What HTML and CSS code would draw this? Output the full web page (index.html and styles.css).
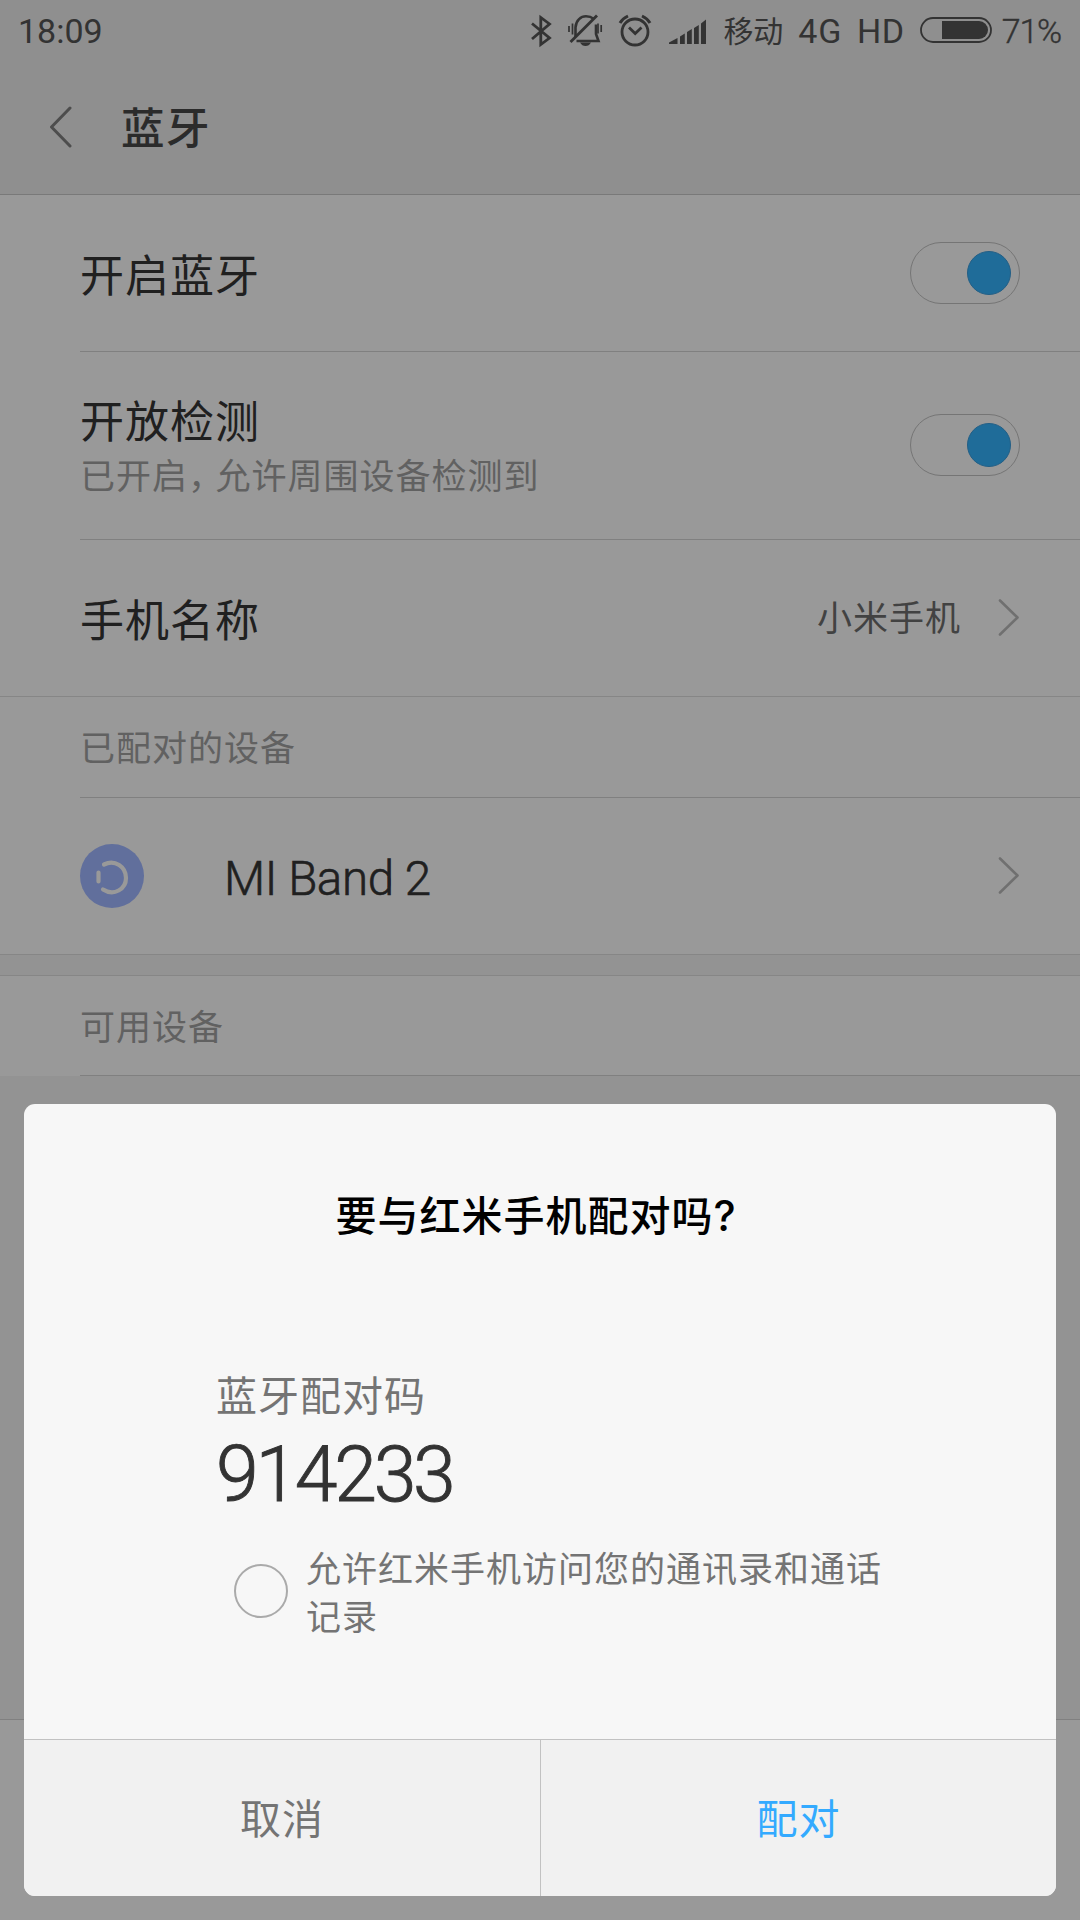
FILE: index.html
```html
<!DOCTYPE html>
<html lang="zh-CN">
<head>
<meta charset="utf-8">
<title>蓝牙</title>
<link rel="stylesheet" href="styles.css">
</head>
<body>
<div class="screen">
  <header class="top">
    <div class="status">
      <span class="clock">18:09</span>
      <svg class="st-icons" width="200" height="50" viewBox="520 5 200 50" fill="none" stroke="#333">
        <path d="M532 22.500 549.500 37 540.800 43.500V16.500L549.500 23 532 38" stroke-width="2.800"/>
        <g stroke-width="2.600">
          <path d="M575.500 36V26.500C576 19 581 15.300 586 15.300 590 15.300 592 16.500 594 18M596 23.500V33L598.500 40H576.500"/>
          <path d="M597 14.500 570.500 41" stroke-width="2.800"/>
          <path d="M569 25v6M572.500 22.500v11M598 22.500v10M601.200 24v7" stroke-width="1.700"/>
        </g>
        <path d="M580 41.500H591Q589 45 585.500 45T580 41.500Z" fill="#333" stroke="none"/>
        <circle cx="635" cy="31" r="13" stroke-width="2.800"/>
        <path d="M629 26.500 635.200 32.500 641.500 26.500" stroke-width="2.800"/>
        <path d="M620 22Q622.500 17.500 628 15M650 22Q647.500 17.500 642 15" stroke-width="3"/>
        <path d="M669 43V41.500L677.500 37V43ZM680 43V35.500L684.800 32.500V43ZM687 43V31L691.800 28V43ZM694 43V27L698.800 24V43ZM701 43V22.500L706 18.500V43Z" fill="#333" stroke="none"/>
      </svg>
      <span class="carrier">移动</span>
      <span class="net">4G</span>
      <span class="hd">HD</span>
      <svg class="battery" width="72" height="26" viewBox="0 0 72 26"><rect x="1" y="1" width="70" height="24" rx="12" fill="none" stroke="#333" stroke-width="1.800"/><path d="M22 4H59A9 9 0 0 1 59 22H22Z" fill="#333"/></svg>
      <span class="pct">71%</span>
    </div>
    <div class="titlebar">
      <svg class="back" width="24" height="42" viewBox="0 0 24 42"><path d="M21 2 2.500 21 21 40" fill="none" stroke="#4d4d4d" stroke-width="3" stroke-linecap="round" stroke-linejoin="round"/></svg>
      <h1>蓝牙</h1>
    </div>
  </header>
  <main>
    <div class="row r1"><span class="label">开启蓝牙</span><i class="toggle"><b></b></i></div>
    <div class="row r2">
      <div class="stack"><span class="label">开放检测</span><span class="sub">已开启<span class="comma">，</span>允许周围设备检测到</span></div>
      <i class="toggle"><b></b></i>
    </div>
    <div class="row r3"><span class="label">手机名称</span><span class="value">小米手机</span>
      <svg class="chev" width="22" height="38" viewBox="0 0 22 38"><path d="M2 1.500 19.500 18.500 2 35.500"/></svg></div>
    <div class="section">已配对的设备</div>
    <div class="row r4">
      <svg class="band" width="64" height="64" viewBox="0 0 64 64" fill="none" stroke="#999" stroke-width="4.200" stroke-linecap="round"><circle cx="32" cy="32" r="32" fill="#616f9c" stroke="none"/><path d="M24 20.500C35 15 46 23 46 34 46 45 34 52.500 23 45.500M18.500 28.500V37.500"/></svg>
      <span class="label device">MI Band 2</span>
      <svg class="chev" width="22" height="38" viewBox="0 0 22 38"><path d="M2 1.500 19.500 18.500 2 35.500"/></svg>
    </div>
    <div class="gap"></div>
    <div class="section available">可用设备</div>
  </main>
  <footer></footer>
  <section class="dialog">
    <div class="body">
      <h2>要与红米手机配对吗<span class="mark">?</span></h2>
      <p class="hint">蓝牙配对码</p>
      <p class="code">914233</p>
      <div class="allow"><i class="check"></i><p>允许红米手机访问您的通讯录和通话记录</p></div>
    </div>
    <div class="buttons"><button>取消</button><button class="ok">配对</button></div>
  </section>
</div>
</body>
</html>
```
FILE: styles.css
```css
* { box-sizing: border-box; margin: 0; padding: 0; }
body { font-family: Roboto, "Noto Sans CJK SC", sans-serif; }
.screen { position: relative; width: 1080px; height: 1920px; background: #939393; display: flex; flex-direction: column; overflow: hidden; }
.top { height: 195px; background: #8f8f8f; border-bottom: 1px solid #797979; flex: none; }
.status { height: 60px; display: flex; align-items: center; color: #333; font-size: 34px; line-height: 60px; padding: 2px 19px 0 18px; white-space: nowrap; }
.clock { width: 504px; }
.st-icons { flex: none; margin-top: -1px; }
.carrier { font-size: 30px; width: 78px; padding-left: 3px; padding-top: 1px; }
.net { width: 59px; letter-spacing: 1px; }
.hd { width: 62px; letter-spacing: .500px; }
.battery { margin: -2px 10px 0 1px; flex: none; }
.pct { font-size: 34px; letter-spacing: -1.200px; font-weight: 300; -webkit-text-stroke: .400px #333; }
.titlebar { display: flex; align-items: center; height: 134px; padding-left: 49px; }
.back { margin-right: 48px; }
h1 { font-size: 43.500px; letter-spacing: 1.500px; font-weight: 500; color: #2b2b2b; line-height: 60px; padding-top: 6px; }
main { flex: none; background: #999; }
.row { margin-left: 80px; padding-right: 60px; border-bottom: 1px solid #808080; display: flex; align-items: center; }
.r1 { height: 157px; }
.r2 { height: 188px; }
.r2 .toggle { margin-top: -2px; }
.r3, .r4 { margin-left: 0; padding-left: 80px; border-color: #868686; height: 157px; }
.label { font-size: 44px; letter-spacing: 1px; line-height: 60px; padding-top: 7px; color: #202020; flex: 1; }
.stack { display: flex; flex-direction: column; flex: 1; padding-top: 8px; }
.stack .label { line-height: 56px; padding-top: 0; flex: none; }
.sub { font-size: 35px; letter-spacing: 1px; line-height: 54px; color: #616161; }
.comma { letter-spacing: -7.500px; }
.toggle { width: 110px; height: 62px; border: 1px solid #757575; border-radius: 31px; padding: 8px; display: flex; justify-content: flex-end; }
.toggle b { width: 44px; height: 44px; border-radius: 50%; background: #1f6c99; border: 1px solid #235f86; }
.value { font-size: 35px; letter-spacing: 1px; line-height: 50px; color: #424242; margin: 4px 37px 0 0; }
.chev { fill: none; stroke: #707070; stroke-width: 2.600px; stroke-linecap: round; stroke-linejoin: round; }
.section { margin-left: 80px; height: 101px; border-bottom: 1px solid #808080; color: #616161; font-size: 35px; letter-spacing: 1px; line-height: 106px; }
.available { height: 100px; line-height: 105px; }
.band { margin-right: 80px; }
.device { font-size: 47.500px; letter-spacing: -.400px; font-weight: 300; -webkit-text-stroke: .600px #202020; padding-top: 5px; }
.gap { height: 21px; background: #939393; border-bottom: 1px solid #868686; }
footer { margin-top: auto; height: 201px; border-top: 1px solid #808080; background: #999; }
.dialog { position: absolute; left: 24px; top: 1104px; width: 1032px; height: 792px; border-radius: 11px; background: #f7f7f7; overflow: hidden; display: flex; flex-direction: column; }
.body { flex: 1; padding: 82px 170px 0 192px; }
h2 { font-size: 41px; letter-spacing: 1px; line-height: 60px; font-weight: 500; color: #000; text-align: center; margin: 0 -170px 0 -190px; }
.mark { display: inline-block; width: 33px; text-align: left; font-family: Inter, sans-serif; font-size: 42px; }
.hint { font-size: 41px; letter-spacing: 1px; line-height: 60px; color: #747474; margin-top: 120px; }
.code { font-size: 77px; letter-spacing: -3.300px; line-height: 88px; font-weight: 300; -webkit-text-stroke: .900px #333; color: #333; margin-top: 4px; }
.allow { display: flex; align-items: center; padding-left: 18px; margin-top: 28px; font-size: 35px; letter-spacing: 1px; line-height: 48px; color: #747474; }
.check { width: 54px; height: 54px; border: 2px solid #aaa; border-radius: 50%; margin: -8px 18px 0 0; flex: none; }
.buttons { display: flex; height: 157px; border-top: 1px solid #c2c2c2; background: #f1f1f1; }
button { width: 516px; border: 0; background: none; font: inherit; font-size: 41px; letter-spacing: 1px; color: #747474; padding-bottom: 4px; }
.ok { border-left: 1px solid #c2c2c2; color: #3af; }
```
